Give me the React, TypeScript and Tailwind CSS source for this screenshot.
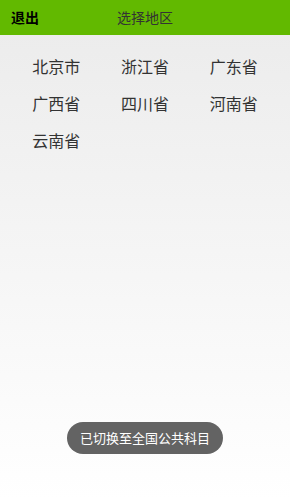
const regions = ['北京市', '浙江省', '广东省', '广西省', '四川省', '河南省', '云南省'];

export default function App() {
    return (
        <div
            className="relative flex h-[500px] w-[290px] flex-col bg-gradient-to-b from-[#ebebeb] to-white"
            style={{ fontFamily: '"Noto Sans CJK SC", "Noto Sans", sans-serif' }}
        >
            <div className="relative flex h-[35px] items-center bg-[#62b900] px-[11px]">
                <span className="text-[14px] font-bold text-black">退出</span>
                <span className="absolute left-1/2 -translate-x-1/2 text-[14px] text-[#333]">选择地区</span>
            </div>

            <div className="grid grid-cols-3 px-3 pt-[12px]">
                {regions.map((name) => (
                    <div key={name} className="flex h-[37px] items-center justify-center text-[16px] text-[#333]">
                        {name}
                    </div>
                ))}
            </div>

            <div className="absolute left-1/2 top-[422px] -translate-x-1/2 rounded-full bg-[#636363] px-[13px] py-[6px] text-[13px] whitespace-nowrap text-white">
                已切换至全国公共科目
            </div>
        </div>
    );
}
